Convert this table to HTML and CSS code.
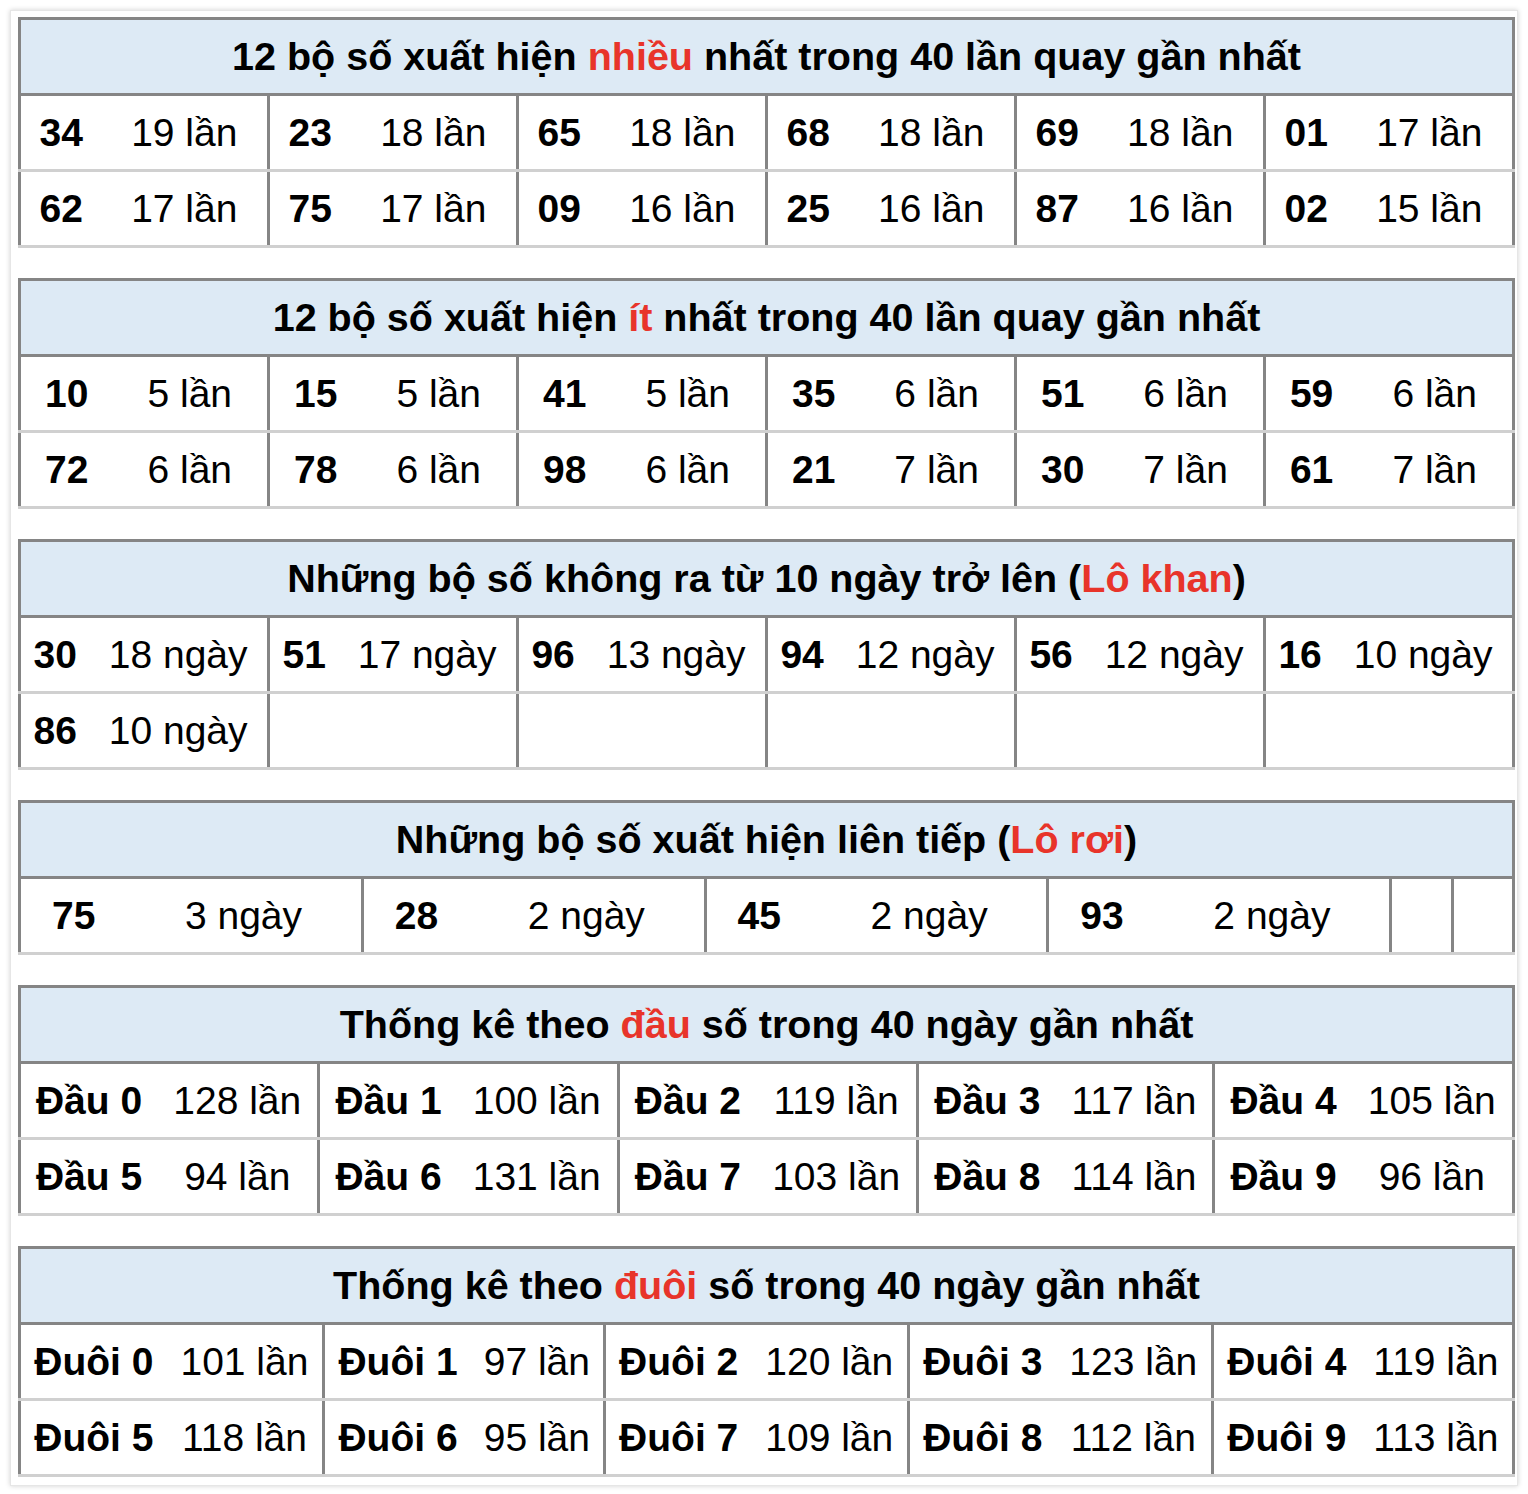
FILE: index.html
```html
<!DOCTYPE html>
<html lang="vi">
<head>
<meta charset="utf-8">
<title>Thống kê lô tô</title>
<link rel="stylesheet" href="styles.css">
</head>
<body>
<div class="wrap">
  <table class="stat">
    <tr><th colspan="12">12 bộ số xuất hiện <span class="hl">nhiều</span> nhất trong 40 lần quay gần nhất</th></tr>
    <tr><td class="n">34</td><td class="c">19 lần</td><td class="n">23</td><td class="c">18 lần</td><td class="n">65</td><td class="c">18 lần</td><td class="n">68</td><td class="c">18 lần</td><td class="n">69</td><td class="c">18 lần</td><td class="n">01</td><td class="c">17 lần</td></tr>
    <tr><td class="n">62</td><td class="c">17 lần</td><td class="n">75</td><td class="c">17 lần</td><td class="n">09</td><td class="c">16 lần</td><td class="n">25</td><td class="c">16 lần</td><td class="n">87</td><td class="c">16 lần</td><td class="n">02</td><td class="c">15 lần</td></tr>
  </table>

  <table class="stat">
    <tr><th colspan="12">12 bộ số xuất hiện <span class="hl">ít</span> nhất trong 40 lần quay gần nhất</th></tr>
    <tr><td class="n">10</td><td class="c">5 lần</td><td class="n">15</td><td class="c">5 lần</td><td class="n">41</td><td class="c">5 lần</td><td class="n">35</td><td class="c">6 lần</td><td class="n">51</td><td class="c">6 lần</td><td class="n">59</td><td class="c">6 lần</td></tr>
    <tr><td class="n">72</td><td class="c">6 lần</td><td class="n">78</td><td class="c">6 lần</td><td class="n">98</td><td class="c">6 lần</td><td class="n">21</td><td class="c">7 lần</td><td class="n">30</td><td class="c">7 lần</td><td class="n">61</td><td class="c">7 lần</td></tr>
  </table>

  <table class="stat">
    <tr><th colspan="12">Những bộ số không ra từ 10 ngày trở lên (<span class="hl">Lô khan</span>)</th></tr>
    <tr><td class="n">30</td><td class="c">18 ngày</td><td class="n">51</td><td class="c">17 ngày</td><td class="n">96</td><td class="c">13 ngày</td><td class="n">94</td><td class="c">12 ngày</td><td class="n">56</td><td class="c">12 ngày</td><td class="n">16</td><td class="c">10 ngày</td></tr>
    <tr><td class="n">86</td><td class="c">10 ngày</td><td class="n"></td><td class="c"></td><td class="n"></td><td class="c"></td><td class="n"></td><td class="c"></td><td class="n"></td><td class="c"></td><td class="n"></td><td class="c"></td></tr>
  </table>

  <table class="stat">
    <tr><th colspan="12">Những bộ số xuất hiện liên tiếp (<span class="hl">Lô rơi</span>)</th></tr>
    <tr><td class="n">75</td><td class="c">3 ngày</td><td class="n">28</td><td class="c">2 ngày</td><td class="n">45</td><td class="c">2 ngày</td><td class="n">93</td><td class="c">2 ngày</td><td class="n"></td><td class="c"></td><td class="n"></td><td class="c"></td></tr>
  </table>

  <table class="stat">
    <tr><th colspan="10">Thống kê theo <span class="hl">đầu</span> số trong 40 ngày gần nhất</th></tr>
    <tr><td class="n">Đầu 0</td><td class="c">128 lần</td><td class="n">Đầu 1</td><td class="c">100 lần</td><td class="n">Đầu 2</td><td class="c">119 lần</td><td class="n">Đầu 3</td><td class="c">117 lần</td><td class="n">Đầu 4</td><td class="c">105 lần</td></tr>
    <tr><td class="n">Đầu 5</td><td class="c">94 lần</td><td class="n">Đầu 6</td><td class="c">131 lần</td><td class="n">Đầu 7</td><td class="c">103 lần</td><td class="n">Đầu 8</td><td class="c">114 lần</td><td class="n">Đầu 9</td><td class="c">96 lần</td></tr>
  </table>

  <table class="stat">
    <tr><th colspan="10">Thống kê theo <span class="hl">đuôi</span> số trong 40 ngày gần nhất</th></tr>
    <tr><td class="n">Đuôi 0</td><td class="c">101 lần</td><td class="n">Đuôi 1</td><td class="c">97 lần</td><td class="n">Đuôi 2</td><td class="c">120 lần</td><td class="n">Đuôi 3</td><td class="c">123 lần</td><td class="n">Đuôi 4</td><td class="c">119 lần</td></tr>
    <tr><td class="n">Đuôi 5</td><td class="c">118 lần</td><td class="n">Đuôi 6</td><td class="c">95 lần</td><td class="n">Đuôi 7</td><td class="c">109 lần</td><td class="n">Đuôi 8</td><td class="c">112 lần</td><td class="n">Đuôi 9</td><td class="c">113 lần</td></tr>
  </table>
</div>
</body>
</html>
```

FILE: styles.css
```css
html, body {
  margin: 0;
  padding: 0;
  background: #ffffff;
}

body {
  font-family: "Liberation Sans", Arial, Helvetica, sans-serif;
  color: #000;
}

.wrap {
  margin: 10px;
  width: 1508px;
  box-sizing: border-box;
  padding: 6px 4px 8px 7px;
  background: #fff;
  border: 1px solid #e6e6e6;
  box-shadow: 0 0 5px rgba(0, 0, 0, 0.18);
}

.stat {
  width: 1497px;
  border-collapse: collapse;
  border: 3px solid #858585;
  margin: 0 0 30px 0;
}

.stat:last-child {
  margin-bottom: 0;
}

.stat th {
  background: #ddeaf5;
  font-size: 39.5px;
  font-weight: bold;
  text-align: center;
  height: 73px;
  padding: 0;
  border-bottom: 3px solid #858585;
}

.stat td {
  font-size: 39px;
  text-align: center;
  height: 73px;
  padding: 0 8px;
  white-space: nowrap;
  border-bottom: 3px solid #d0d0d0;
}

.stat td.n {
  font-weight: bold;
}

.stat td.c {
  border-right: 3px solid #858585;
}

.hl {
  color: #e8342a;
}
```
